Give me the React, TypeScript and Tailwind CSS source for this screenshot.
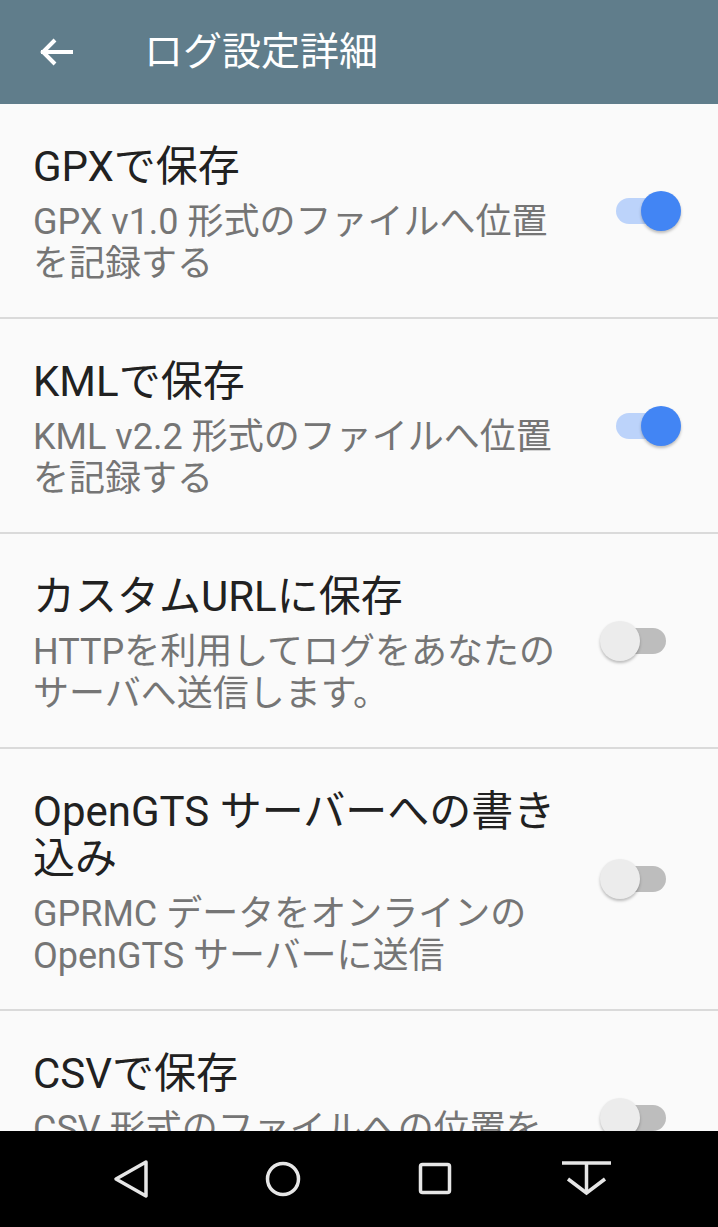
import React from 'react';

interface PrefRowProps {
  title: React.ReactNode;
  summary: React.ReactNode;
  checked: boolean;
}

function Toggle({ checked }: { checked: boolean }) {
  return (
    <div className="relative w-[82px] h-[42px] shrink-0">
      <div
        className={`absolute left-[16px] top-[8px] w-[50px] h-[26px] rounded-full ${
          checked ? 'bg-[#bcd3fa]' : 'bg-[#bdbdbd]'
        }`}
      />
      <div
        className={`absolute top-[1px] w-[40px] h-[40px] rounded-full shadow-[0_2px_3px_rgba(0,0,0,0.25)] ${
          checked ? 'left-[41px] bg-[#4285f4]' : 'left-0 bg-[#ececec]'
        }`}
      />
    </div>
  );
}

function PrefRow({ title, summary, checked }: PrefRowProps) {
  return (
    <div className="flex items-center pl-[33px] border-b-2 border-[#dadada]">
      <div className="w-[532px] pt-[39px] pb-[32px]">
        <div className="text-[42px] leading-[47px] text-[#212121]">{title}</div>
        <div className="mt-[11px] text-[36px] leading-[42px] text-[#757575]">{summary}</div>
      </div>
      <div className="ml-[35px]">
        <Toggle checked={checked} />
      </div>
    </div>
  );
}

export default function App() {
  return (
    <div
      className="h-screen flex flex-col bg-[#fafafa] overflow-hidden"
      style={{ fontFamily: "Roboto, 'Noto Sans CJK JP', sans-serif" }}
    >
      <header className="h-[104px] shrink-0 bg-[#607d8b] flex items-center">
        <svg className="ml-[38px] w-[36px] h-[32px]" viewBox="0 0 36 32" fill="none" stroke="white" strokeWidth="4" strokeLinecap="square">
          <path d="M5 16H33" />
          <path d="M17 4L5 16L17 28" strokeLinecap="butt" strokeLinejoin="miter" />
        </svg>
        <h1 className="ml-[70px] text-[39px] text-white font-normal">ログ設定詳細</h1>
      </header>

      <main className="flex-1 overflow-hidden">
        <PrefRow title="GPXで保存" summary="GPX v1.0 形式のファイルへ位置を記録する" checked />
        <PrefRow title="KMLで保存" summary="KML v2.2 形式のファイルへ位置を記録する" checked />
        <PrefRow title="カスタムURLに保存" summary="HTTPを利用してログをあなたのサーバへ送信します。" checked={false} />
        <PrefRow title="OpenGTS サーバーへの書き込み" summary="GPRMC データをオンラインの OpenGTS サーバーに送信" checked={false} />
        <PrefRow title="CSVで保存" summary="CSV 形式のファイルへの位置を記録する" checked={false} />
      </main>

      <nav className="h-[96px] shrink-0 bg-black grid grid-cols-4 px-[55px] items-center justify-items-center">
        <svg width="40" height="40" viewBox="0 0 40 40" fill="none" stroke="#e6e6e6" strokeWidth="3.5" strokeLinejoin="round">
          <path d="M35 3L5 20L35 37Z" />
        </svg>
        <svg width="40" height="40" viewBox="0 0 40 40" fill="none" stroke="#e6e6e6" strokeWidth="3.5">
          <circle cx="20" cy="20" r="15.5" />
        </svg>
        <svg width="40" height="40" viewBox="0 0 40 40" fill="none" stroke="#e6e6e6" strokeWidth="3.5">
          <rect x="5.5" y="5.5" width="29" height="28" rx="2" />
        </svg>
        <svg width="52" height="40" viewBox="0 0 52 40" fill="none" stroke="#e6e6e6" strokeWidth="3.5">
          <path d="M1 4H50" />
          <path d="M25.5 4V32" />
          <path d="M7 20L25.5 34L44 20" />
        </svg>
      </nav>
    </div>
  );
}
